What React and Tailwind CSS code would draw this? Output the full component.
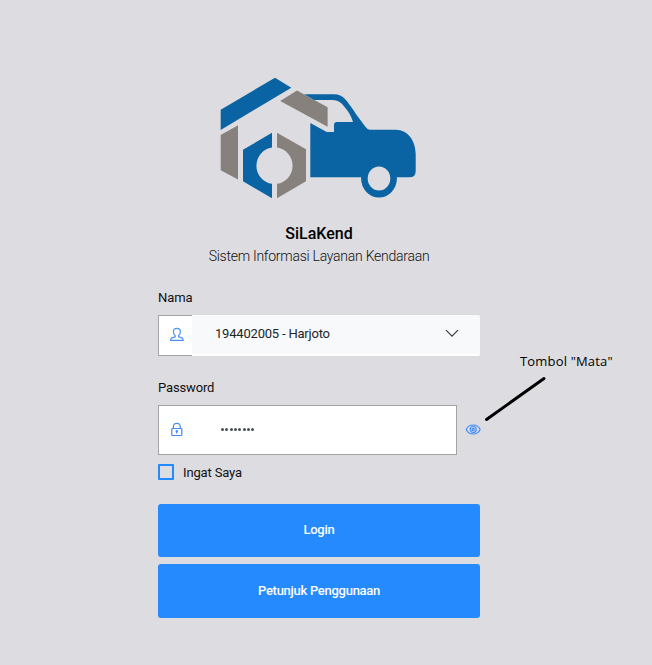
function Logo() {
  return (
    <svg className="mx-auto block h-[135px] w-[215px]" viewBox="0 0 215 135" aria-label="SiLaKend">
      <g fill="#0a64a4">
        <path d="M65 7.7 81.3 17.7 10.7 60V39.8Z" />
        <path d="M62 62.7 33 79.8V111.3L62 128.3V113.8A18.3 18.3 0 0 1 62 77.6Z" />
        <path d="M94 24.3H124C129 24.3 132 26 134.5 28.5C138 32 143 39.5 148.3 47.3L155 56.3Q157.2 59.7 160 59.7H186C198 59.7 205.7 71 205.7 84V101Q205.7 107.3 199.5 107.3H100.3V53L116.7 62H124V55Q124 52 127 52H143C141.5 46.5 139 42.5 135.8 38.5C132.5 34.5 130 30.2 122 30H104Z" />
        <ellipse cx="169" cy="108.6" rx="17.9" ry="19" />
      </g>
      <ellipse cx="169" cy="108.6" rx="11.3" ry="12" fill="#dddce0" />
      <g fill="#86817d">
        <path d="M87 20.5 117.6 37.3V56.8L70.2 31Z" />
        <path d="M10.7 65 28 55.3V109.4L10.7 100.3Z" />
        <path d="M67 62.7 96 79.3V111.3L67 128.3V113.8A18.3 18.3 0 0 0 67 77.6Z" />
      </g>
    </svg>
  );
}

function PersonIcon() {
  return (
    <svg className="h-4 w-4" viewBox="0 0 16 16" fill="none" stroke="#4b93fb" strokeWidth="1.2">
      <path d="M6.2 8.6C5 7.6 4.4 6.2 4.4 4.6C4.4 2.4 5.5 1.4 7.9 1.4S11.4 2.4 11.4 4.6C11.4 6.2 10.8 7.6 9.6 8.6V9.8L12.9 10.9Q14.2 11.5 14.2 13.4H1.6Q1.6 11.5 2.9 10.9L6.2 9.8Z" />
    </svg>
  );
}

function LockIcon() {
  return (
    <svg className="h-4 w-4" viewBox="0 0 16 16" fill="none" stroke="#3d8bfd" strokeWidth="1.2">
      <rect x="2.8" y="6.5" width="10" height="7" rx=".7" />
      <path d="M4.4 6.5V4.4Q4.4 1.4 7.8 1.4T11.2 4.4V6.5M7.8 9.3V11.5" />
      <circle cx="7.8" cy="9.3" r=".6" fill="#3d8bfd" />
    </svg>
  );
}

function EyeIcon() {
  return (
    <svg className="h-[11px] w-4" viewBox="0 0 16 11" fill="none" stroke="#3d8bfd" strokeWidth="1.1">
      <path d="M1.2 5.5C2.6 2.3 5 1 8.2 1S13.8 2.3 15.2 5.5C13.8 8.7 11.4 10 8.2 10S2.6 8.7 1.2 5.5Z" />
      <circle cx="8.2" cy="5.5" r="3" />
      <circle cx="8.2" cy="5.5" r="1.1" />
    </svg>
  );
}

export default function App() {
  return (
    <main className="relative h-[665px] w-[652px] overflow-hidden bg-[#dddce0] pt-[70px] font-[Roboto,sans-serif] text-[13px] leading-5 text-[#111]">
      <div className="pr-[17px]">
        <Logo />
      </div>
      <form className="ml-[158px] flex w-[322px] flex-col">
        <h1 className="mt-[19px] text-center text-base leading-5 font-medium text-black">SiLaKend</h1>
        <p className="mt-[2px] text-center text-sm leading-5 font-light tracking-[-0.26px] whitespace-nowrap">
          Sistem Informasi Layanan Kendaraan
        </p>

        <label className="mt-[22px] leading-5 tracking-[-0.1px]">Nama</label>
        <div className="mt-[7px] flex h-[41px]">
          <div className="flex w-[34px] items-center justify-center border border-r-0 border-[#a3a3a3] bg-white pb-[2px] pl-[3px]">
            <PersonIcon />
          </div>
          <div className="flex flex-1 items-center justify-between rounded-r-[2px] border-b-2 border-white bg-[#f8f9fb] pr-[21px] pb-[2px] pl-[23px] text-[#212529]">
            <span className="tracking-[-0.2px]">194402005 - Harjoto</span>
            <svg className="h-[14px] w-[14px]" viewBox="0 0 14 14" fill="none" stroke="#343a40" strokeWidth="1.2">
              <path d="m1 3.2 6 6 6-6" />
            </svg>
          </div>
        </div>

        <label className="mt-[22px] tracking-[-0.15px]">Password</label>
        <div className="mt-[7px] flex h-[50px] items-center">
          <div className="flex h-full w-[299px] shrink-0 items-center border border-[#a3a3a3] bg-white pl-[10px]">
            <LockIcon />
            <span className="mb-[2px] ml-[36px] flex gap-[1.35px]">
              {Array.from({ length: 8 }, (_, i) => (
                <i key={i} className="h-[3px] w-[3px] rounded-full bg-[#495057]" />
              ))}
            </span>
          </div>
          <button type="button" className="mb-[2px] ml-2 shrink-0" aria-label="Mata">
            <EyeIcon />
          </button>
        </div>

        <label className="mt-[7px] flex h-5 items-center gap-[9px]">
          <span className="h-4 w-4 rounded-[1px] border-2 border-[#268aff]" />
          <span className="pt-[2px] tracking-[-0.15px]">Ingat Saya</span>
        </label>

        <button type="button" className="mt-[22px] h-[53px] rounded-[3px] bg-[#268aff] pb-[2px] font-medium tracking-[-0.3px] text-white">
          Login
        </button>
        <button type="button" className="mt-[7px] h-[54px] rounded-[3px] bg-[#268aff] font-medium tracking-[-0.28px] text-white">
          Petunjuk Penggunaan
        </button>
      </form>

      <div className="absolute top-[351px] left-[520px] font-['Open_Sans',sans-serif] text-[13px] leading-5 tracking-[0.17px] whitespace-nowrap text-black">
        Tombol "Mata"
      </div>
      <svg className="absolute top-[370px] left-[480px] h-[56px] w-[70px]" viewBox="0 0 70 56">
        <path d="M6.5 49.5 64 8.5" stroke="#000" strokeWidth="3" strokeLinecap="round" />
      </svg>
    </main>
  );
}
